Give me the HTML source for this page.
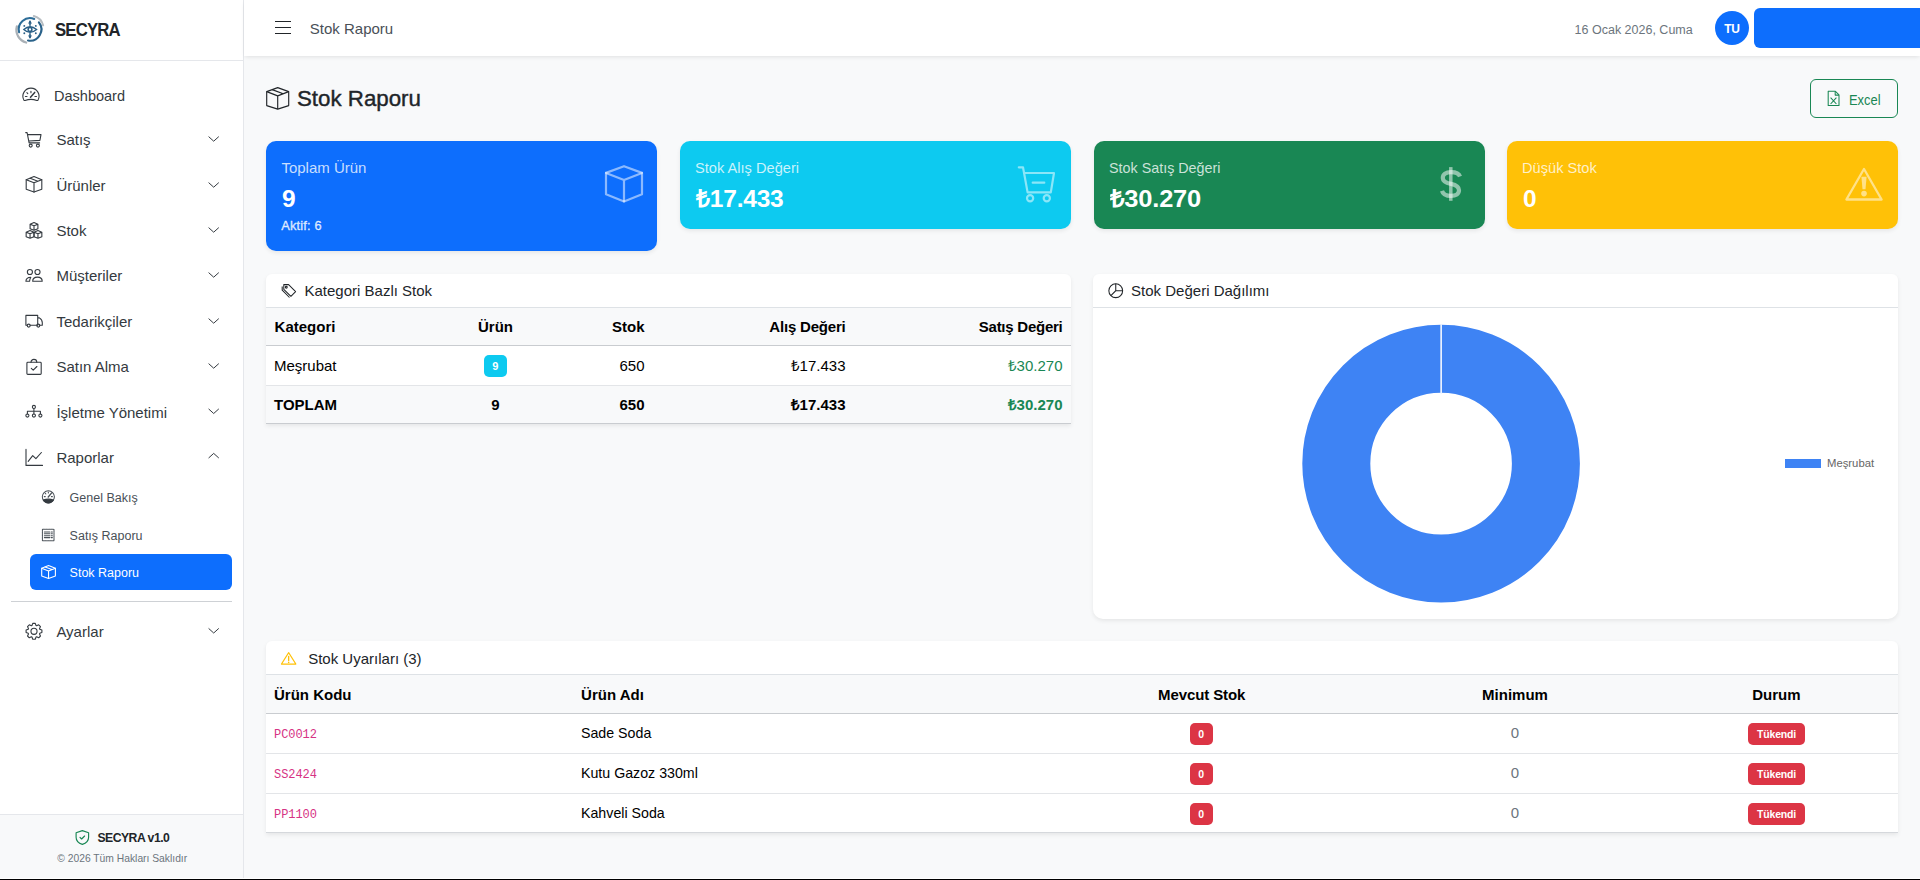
<!DOCTYPE html>
<html lang="tr">
<head>
<meta charset="utf-8">
<title>Stok Raporu</title>
<style>
*{box-sizing:border-box;margin:0;padding:0}
html,body{width:1920px;height:880px;overflow:hidden}
body{font-family:"Liberation Sans",sans-serif;background:#f8f9fa;color:#212529;position:relative}
.abs{position:absolute}
svg{display:block;overflow:visible}
</style>
</head>
<body>
<div class="abs" style="left:0px;top:878px;width:1920px;height:1px;background:#ffffff;"></div>
<div class="abs" style="left:0px;top:879px;width:1920px;height:1px;background:#000000;"></div>
<div class="abs" style="left:0px;top:0px;width:243px;height:878px;background:#ffffff;"></div>
<div class="abs" style="left:243px;top:0px;width:1px;height:878px;background:#e5e7eb;"></div>
<div class="abs" style="left:0px;top:60px;width:243px;height:1px;background:#e5e7eb;"></div>
<div class="abs" style="left:55px;top:21.34px;font-size:18.5px;line-height:1;color:#212529;white-space:nowrap;font-weight:700;letter-spacing:-0.9px;transform:scaleX(0.905);transform-origin:left center;">SECYRA</div>
<div class="abs" style="left:54.4px;top:88.30px;font-size:15px;line-height:1;color:#343a40;white-space:nowrap;transform:scaleX(0.968);transform-origin:left center;">Dashboard</div>
<div class="abs" style="left:56.4px;top:132.30px;font-size:15px;line-height:1;color:#343a40;white-space:nowrap;">Satış</div>
<div class="abs" style="left:56.4px;top:178.30px;font-size:15px;line-height:1;color:#343a40;white-space:nowrap;">Ürünler</div>
<div class="abs" style="left:56.4px;top:223.30px;font-size:15px;line-height:1;color:#343a40;white-space:nowrap;">Stok</div>
<div class="abs" style="left:56.4px;top:268.30px;font-size:15px;line-height:1;color:#343a40;white-space:nowrap;">Müşteriler</div>
<div class="abs" style="left:56.4px;top:314.30px;font-size:15px;line-height:1;color:#343a40;white-space:nowrap;">Tedarikçiler</div>
<div class="abs" style="left:56.4px;top:359.30px;font-size:15px;line-height:1;color:#343a40;white-space:nowrap;">Satın Alma</div>
<div class="abs" style="left:56.4px;top:404.60px;font-size:15px;line-height:1;color:#343a40;white-space:nowrap;">İşletme Yönetimi</div>
<div class="abs" style="left:56.4px;top:450.30px;font-size:15px;line-height:1;color:#343a40;white-space:nowrap;">Raporlar</div>
<div class="abs" style="left:56.4px;top:624.10px;font-size:15px;line-height:1;color:#343a40;white-space:nowrap;">Ayarlar</div>
<div class="abs" style="left:30px;top:554px;width:202px;height:36px;background:#0d6efd;border-radius:6px;"></div>
<div class="abs" style="left:69.6px;top:491.82px;font-size:12.5px;line-height:1;color:#495057;white-space:nowrap;">Genel Bakış</div>
<div class="abs" style="left:69.6px;top:529.62px;font-size:12.5px;line-height:1;color:#495057;white-space:nowrap;">Satış Raporu</div>
<div class="abs" style="left:69.6px;top:566.62px;font-size:12.5px;line-height:1;color:#ffffff;white-space:nowrap;">Stok Raporu</div>
<div class="abs" style="left:11px;top:601px;width:221px;height:1px;background:#ced1d5;"></div>
<div class="abs" style="left:0px;top:814px;width:243px;height:64px;background:#f8f9fa;"></div>
<div class="abs" style="left:0px;top:814px;width:243px;height:1px;background:#e5e7eb;"></div>
<div class="abs" style="left:97.4px;top:831.67px;font-size:12.2px;line-height:1;color:#212529;white-space:nowrap;font-weight:700;letter-spacing:-0.5px;">SECYRA v1.0</div>
<div class="abs" style="left:57.3px;top:854.28px;font-size:10.3px;line-height:1;color:#6c757d;white-space:nowrap;">© 2026 Tüm Hakları Saklıdır</div>
<div class="abs" style="left:244px;top:0;width:1676px;height:56px;background:#fff;box-shadow:0 2px 4px -1px rgba(0,0,0,.1)"></div>
<div class="abs" style="left:274.6px;top:21.2px;width:16px;height:1.3px;background:#212529;"></div>
<div class="abs" style="left:274.6px;top:27.0px;width:16px;height:1.3px;background:#212529;"></div>
<div class="abs" style="left:274.6px;top:32.8px;width:16px;height:1.3px;background:#212529;"></div>
<div class="abs" style="left:309.8px;top:21.30px;font-size:15px;line-height:1;color:#495057;white-space:nowrap;">Stok Raporu</div>
<div class="abs" style="left:1574.6px;top:23.72px;font-size:12.5px;line-height:1;color:#6c757d;white-space:nowrap;">16 Ocak 2026, Cuma</div>
<div class="abs" style="left:1715px;top:11px;width:34px;height:34px;border-radius:50%;background:#0d6efd"></div>
<div class="abs" style="left:1715px;top:23.04px;font-size:12px;line-height:1;color:#fff;white-space:nowrap;font-weight:700;letter-spacing:-0.3px;width:34px;text-align:center;">TU</div>
<div class="abs" style="left:1754px;top:8px;width:180px;height:39.5px;background:#0d6efd;border-radius:6px;"></div>
<div class="abs" style="left:297px;top:87.72px;font-size:22.3px;line-height:1;color:#212529;white-space:nowrap;-webkit-text-stroke:0.4px #212529;">Stok Raporu</div>
<div class="abs" style="left:1810px;top:79px;width:88px;height:38.5px;border:1px solid #198754;border-radius:6px"></div>
<div class="abs" style="left:1849.4px;top:91.70px;font-size:15px;line-height:1;color:#198754;white-space:nowrap;transform:scaleX(0.86);transform-origin:left center;">Excel</div>
<div class="abs" style="left:266px;top:141px;width:391px;height:110px;background:#0d6efd;border-radius:10px;box-shadow:0 2px 4px rgba(0,0,0,.075)"></div>
<div class="abs" style="left:281.4px;top:160.00px;font-size:15px;line-height:1;color:rgba(255,255,255,.78);white-space:nowrap;">Toplam Ürün</div>
<div class="abs" style="left:282px;top:187.26px;font-size:24.5px;line-height:1;color:#fff;white-space:nowrap;font-weight:700;letter-spacing:-0.2px;">9</div>
<div class="abs" style="left:680px;top:141px;width:391px;height:88px;background:#0dcaf0;border-radius:10px;box-shadow:0 2px 4px rgba(0,0,0,.075)"></div>
<div class="abs" style="left:695.4px;top:160.00px;font-size:15px;line-height:1;color:rgba(255,255,255,.78);white-space:nowrap;transform:scaleX(0.975);transform-origin:left center;">Stok Alış Değeri</div>
<div class="abs" style="left:696px;top:187.26px;font-size:24.5px;line-height:1;color:#fff;white-space:nowrap;font-weight:700;letter-spacing:-0.2px;">₺17.433</div>
<div class="abs" style="left:1093.5px;top:141px;width:391px;height:88px;background:#198754;border-radius:10px;box-shadow:0 2px 4px rgba(0,0,0,.075)"></div>
<div class="abs" style="left:1108.9px;top:160.00px;font-size:15px;line-height:1;color:rgba(255,255,255,.78);white-space:nowrap;transform:scaleX(0.955);transform-origin:left center;">Stok Satış Değeri</div>
<div class="abs" style="left:1109.5px;top:187.26px;font-size:24.5px;line-height:1;color:#fff;white-space:nowrap;font-weight:700;letter-spacing:-0.2px;transform:scaleX(1.04);transform-origin:left center;">₺30.270</div>
<div class="abs" style="left:1507px;top:141px;width:391px;height:88px;background:#ffc107;border-radius:10px;box-shadow:0 2px 4px rgba(0,0,0,.075)"></div>
<div class="abs" style="left:1522.4px;top:160.00px;font-size:15px;line-height:1;color:rgba(255,255,255,.78);white-space:nowrap;transform:scaleX(0.975);transform-origin:left center;">Düşük Stok</div>
<div class="abs" style="left:1523px;top:187.26px;font-size:24.5px;line-height:1;color:#fff;white-space:nowrap;font-weight:700;letter-spacing:-0.2px;">0</div>
<div class="abs" style="left:281.2px;top:220.16px;font-size:12.8px;line-height:1;color:rgba(255,255,255,.8);white-space:nowrap;letter-spacing:0.2px;-webkit-text-stroke:0.35px rgba(255,255,255,.8);">Aktif: 6</div>
<div class="abs" style="left:266px;top:274px;width:805px;height:150px;background:#fff;border-radius:6px 6px 0 0;box-shadow:0 2px 4px rgba(0,0,0,.075)"></div>
<div class="abs" style="left:304.5px;top:283.10px;font-size:15px;line-height:1;color:#212529;white-space:nowrap;">Kategori Bazlı Stok</div>
<div class="abs" style="left:266px;top:307px;width:805px;height:1px;background:#dee2e6;"></div>
<div class="abs" style="left:266px;top:308px;width:805px;height:37px;background:#f8f9fa;"></div>
<div class="abs" style="left:266px;top:345px;width:805px;height:1.3px;background:#c9ccd0;"></div>
<div class="abs" style="left:266px;top:385px;width:805px;height:1px;background:#e3e5e8;"></div>
<div class="abs" style="left:266px;top:386px;width:805px;height:37px;background:#f8f9fa;"></div>
<div class="abs" style="left:266px;top:423px;width:805px;height:1.3px;background:#c9ccd0;"></div>
<div class="abs" style="left:274.6px;top:318.90px;font-size:15px;line-height:1;color:#000;white-space:nowrap;font-weight:700;">Kategori</div>
<div class="abs" style="left:425px;top:318.90px;font-size:15px;line-height:1;color:#000;white-space:nowrap;font-weight:700;width:141px;text-align:center;">Ürün</div>
<div class="abs" style="left:500px;top:318.90px;font-size:15px;line-height:1;color:#000;white-space:nowrap;font-weight:700;width:144.5px;text-align:right;">Stok</div>
<div class="abs" style="left:700px;top:318.90px;font-size:15px;line-height:1;color:#000;white-space:nowrap;font-weight:700;letter-spacing:-0.2px;width:145.5px;text-align:right;">Alış Değeri</div>
<div class="abs" style="left:900px;top:318.90px;font-size:15px;line-height:1;color:#000;white-space:nowrap;font-weight:700;letter-spacing:-0.25px;width:162.5px;text-align:right;">Satış Değeri</div>
<div class="abs" style="left:274px;top:358.30px;font-size:15px;line-height:1;color:#000;white-space:nowrap;">Meşrubat</div>
<div class="abs" style="left:484px;top:355.3px;width:22.6px;height:21.5px;background:#0dcaf0;border-radius:5px"></div>
<div class="abs" style="left:484px;top:361.19px;font-size:11px;line-height:1;color:#fff;white-space:nowrap;font-weight:700;width:22.6px;text-align:center;">9</div>
<div class="abs" style="left:500px;top:358.30px;font-size:15px;line-height:1;color:#000;white-space:nowrap;width:144.5px;text-align:right;">650</div>
<div class="abs" style="left:700px;top:358.30px;font-size:15px;line-height:1;color:#000;white-space:nowrap;width:145.5px;text-align:right;">₺17.433</div>
<div class="abs" style="left:900px;top:358.30px;font-size:15px;line-height:1;color:#198754;white-space:nowrap;width:162.5px;text-align:right;">₺30.270</div>
<div class="abs" style="left:274px;top:397.30px;font-size:15px;line-height:1;color:#000;white-space:nowrap;font-weight:700;">TOPLAM</div>
<div class="abs" style="left:425px;top:397.30px;font-size:15px;line-height:1;color:#000;white-space:nowrap;font-weight:700;width:141px;text-align:center;">9</div>
<div class="abs" style="left:500px;top:397.30px;font-size:15px;line-height:1;color:#000;white-space:nowrap;font-weight:700;width:144.5px;text-align:right;">650</div>
<div class="abs" style="left:700px;top:397.30px;font-size:15px;line-height:1;color:#000;white-space:nowrap;font-weight:700;width:145.5px;text-align:right;">₺17.433</div>
<div class="abs" style="left:900px;top:397.30px;font-size:15px;line-height:1;color:#198754;white-space:nowrap;font-weight:700;width:162.5px;text-align:right;">₺30.270</div>
<div class="abs" style="left:1093px;top:274px;width:805px;height:345px;background:#fff;border-radius:6px 6px 10px 10px;box-shadow:0 2px 4px rgba(0,0,0,.075)"></div>
<div class="abs" style="left:1131.1px;top:283.30px;font-size:15px;line-height:1;color:#212529;white-space:nowrap;">Stok Değeri Dağılımı</div>
<div class="abs" style="left:1093px;top:307px;width:805px;height:1px;background:#dee2e6;"></div>
<div class="abs" style="left:1785px;top:458.8px;width:35.8px;height:9.4px;background:#3e83f4;"></div>
<div class="abs" style="left:1827px;top:457.93px;font-size:11.3px;line-height:1;color:#666666;white-space:nowrap;">Meşrubat</div>
<div class="abs" style="left:266px;top:641px;width:1632px;height:191.5px;background:#fff;border-radius:6px 6px 0 0;box-shadow:0 2px 4px rgba(0,0,0,.075)"></div>
<div class="abs" style="left:308.2px;top:651.20px;font-size:15px;line-height:1;color:#212529;white-space:nowrap;">Stok Uyarıları (3)</div>
<div class="abs" style="left:266px;top:674px;width:1632px;height:1px;background:#dee2e6;"></div>
<div class="abs" style="left:266px;top:675px;width:1632px;height:38px;background:#f8f9fa;"></div>
<div class="abs" style="left:266px;top:713px;width:1632px;height:1.3px;background:#c9ccd0;"></div>
<div class="abs" style="left:266px;top:753px;width:1632px;height:1px;background:#e3e5e8;"></div>
<div class="abs" style="left:266px;top:793px;width:1632px;height:1px;background:#e3e5e8;"></div>
<div class="abs" style="left:266px;top:831.5px;width:1632px;height:1px;background:#d5d8dc;"></div>
<div class="abs" style="left:274px;top:687.10px;font-size:15px;line-height:1;color:#000;white-space:nowrap;font-weight:700;">Ürün Kodu</div>
<div class="abs" style="left:581.1px;top:687.10px;font-size:15px;line-height:1;color:#000;white-space:nowrap;font-weight:700;">Ürün Adı</div>
<div class="abs" style="left:1101.7px;top:687.10px;font-size:15px;line-height:1;color:#000;white-space:nowrap;font-weight:700;letter-spacing:-0.1px;width:200px;text-align:center;">Mevcut Stok</div>
<div class="abs" style="left:1415px;top:687.10px;font-size:15px;line-height:1;color:#000;white-space:nowrap;font-weight:700;width:200px;text-align:center;">Minimum</div>
<div class="abs" style="left:1676.4px;top:687.10px;font-size:15px;line-height:1;color:#000;white-space:nowrap;font-weight:700;width:200px;text-align:center;">Durum</div>
<div class="abs" style="left:274px;top:728.84px;font-size:12px;line-height:1;color:#d63384;white-space:nowrap;letter-spacing:-0.07px;font-family:'Liberation Mono',monospace;">PC0012</div>
<div class="abs" style="left:581.1px;top:725.30px;font-size:15px;line-height:1;color:#000;white-space:nowrap;transform:scaleX(0.947);transform-origin:left center;">Sade Soda</div>
<div class="abs" style="left:1189.6px;top:723.3px;width:23.3px;height:21.3px;background:#dc3545;border-radius:5px"></div>
<div class="abs" style="left:1189.6px;top:729.41px;font-size:10.5px;line-height:1;color:#fff;white-space:nowrap;font-weight:700;width:23.3px;text-align:center;">0</div>
<div class="abs" style="left:1415px;top:725.30px;font-size:15px;line-height:1;color:#6c757d;white-space:nowrap;width:200px;text-align:center;">0</div>
<div class="abs" style="left:1748px;top:723.3px;width:57px;height:21.3px;background:#dc3545;border-radius:5px"></div>
<div class="abs" style="left:1748px;top:729.41px;font-size:10.5px;line-height:1;color:#fff;white-space:nowrap;font-weight:700;letter-spacing:-0.2px;width:57px;text-align:center;">Tükendi</div>
<div class="abs" style="left:274px;top:768.84px;font-size:12px;line-height:1;color:#d63384;white-space:nowrap;letter-spacing:-0.07px;font-family:'Liberation Mono',monospace;">SS2424</div>
<div class="abs" style="left:581.1px;top:765.30px;font-size:15px;line-height:1;color:#000;white-space:nowrap;transform:scaleX(0.947);transform-origin:left center;">Kutu Gazoz 330ml</div>
<div class="abs" style="left:1189.6px;top:763.3px;width:23.3px;height:21.3px;background:#dc3545;border-radius:5px"></div>
<div class="abs" style="left:1189.6px;top:769.41px;font-size:10.5px;line-height:1;color:#fff;white-space:nowrap;font-weight:700;width:23.3px;text-align:center;">0</div>
<div class="abs" style="left:1415px;top:765.30px;font-size:15px;line-height:1;color:#6c757d;white-space:nowrap;width:200px;text-align:center;">0</div>
<div class="abs" style="left:1748px;top:763.3px;width:57px;height:21.3px;background:#dc3545;border-radius:5px"></div>
<div class="abs" style="left:1748px;top:769.41px;font-size:10.5px;line-height:1;color:#fff;white-space:nowrap;font-weight:700;letter-spacing:-0.2px;width:57px;text-align:center;">Tükendi</div>
<div class="abs" style="left:274px;top:808.84px;font-size:12px;line-height:1;color:#d63384;white-space:nowrap;letter-spacing:-0.07px;font-family:'Liberation Mono',monospace;">PP1100</div>
<div class="abs" style="left:581.1px;top:805.30px;font-size:15px;line-height:1;color:#000;white-space:nowrap;transform:scaleX(0.947);transform-origin:left center;">Kahveli Soda</div>
<div class="abs" style="left:1189.6px;top:803.3px;width:23.3px;height:21.3px;background:#dc3545;border-radius:5px"></div>
<div class="abs" style="left:1189.6px;top:809.41px;font-size:10.5px;line-height:1;color:#fff;white-space:nowrap;font-weight:700;width:23.3px;text-align:center;">0</div>
<div class="abs" style="left:1415px;top:805.30px;font-size:15px;line-height:1;color:#6c757d;white-space:nowrap;width:200px;text-align:center;">0</div>
<div class="abs" style="left:1748px;top:803.3px;width:57px;height:21.3px;background:#dc3545;border-radius:5px"></div>
<div class="abs" style="left:1748px;top:809.41px;font-size:10.5px;line-height:1;color:#fff;white-space:nowrap;font-weight:700;letter-spacing:-0.2px;width:57px;text-align:center;">Tükendi</div>
<svg class="abs" style="left:0;top:0" width="1920" height="880" viewBox="0 0 1920 880"><path d="M208.6 136.6 L213.7 141.2 L218.8 136.6" stroke="#343a40" stroke-width="1" fill="none"/><path d="M208.6 182.6 L213.7 187.2 L218.8 182.6" stroke="#343a40" stroke-width="1" fill="none"/><path d="M208.6 227.6 L213.7 232.2 L218.8 227.6" stroke="#343a40" stroke-width="1" fill="none"/><path d="M208.6 272.6 L213.7 277.2 L218.8 272.6" stroke="#343a40" stroke-width="1" fill="none"/><path d="M208.6 318.6 L213.7 323.2 L218.8 318.6" stroke="#343a40" stroke-width="1" fill="none"/><path d="M208.6 363.6 L213.7 368.2 L218.8 363.6" stroke="#343a40" stroke-width="1" fill="none"/><path d="M208.6 408.9 L213.7 413.5 L218.8 408.9" stroke="#343a40" stroke-width="1" fill="none"/><path d="M208.6 458.0 L213.7 453.4 L218.8 458.0" stroke="#343a40" stroke-width="1" fill="none"/><path d="M208.6 628.4 L213.7 633.0 L218.8 628.4" stroke="#343a40" stroke-width="1" fill="none"/><g fill="none" stroke="#343a40" stroke-width="1.1" stroke-linecap="round" stroke-linejoin="round"><path d="M23.9 100.1 A8.05 8.05 0 1 1 38.0 100.1 Q37.6 100.7 36.8 100.4 Q31 98.4 25.1 100.4 Q24.3 100.7 23.9 100.1Z"/><path d="M30.95 91.3V92.7M25.4 96.5H27M34.9 96.5H36.5M26.9 92.7L27.8 93.6"/><path d="M30.5 97.2L34.7 92.4" stroke-width="1.5"/><path d="M25.7 132.6H27.1L29.1 142.9H39.6M27.6 134.6H41L39.9 140.4L28.8 141"/><circle cx="30.7" cy="145.6" r="1.5"/><circle cx="37.9" cy="145.6" r="1.5"/><path d="M34 176.6 41.8 179.7V189.2L34 192.1 26.2 189.2V179.7Z"/><path d="M26.2 179.7 34 182.8 41.8 179.7M34 182.8V192.1M30.1 178.2 37.9 181.2"/><path d="M34 222.6 L37.9 224.2 V228.7 L34 230.29999999999998 L30.1 228.7 V224.2Z M30.1 224.2 L34 225.79999999999998 L37.9 224.2 M34 225.79999999999998 V230.29999999999998"/><path d="M30.05 230.6 L33.95 232.2 V236.7 L30.05 238.29999999999998 L26.150000000000002 236.7 V232.2Z M26.150000000000002 232.2 L30.05 233.79999999999998 L33.95 232.2 M30.05 233.79999999999998 V238.29999999999998"/><path d="M37.95 230.6 L41.85 232.2 V236.7 L37.95 238.29999999999998 L34.050000000000004 236.7 V232.2Z M34.050000000000004 232.2 L37.95 233.79999999999998 L41.85 232.2 M37.95 233.79999999999998 V238.29999999999998"/><circle cx="29.9" cy="272" r="2.55"/><circle cx="37.5" cy="272" r="2.55"/><path d="M32.7 281.2C32.7 278.7 34.7 277.1 37.45 277.1S42.2 278.7 42.2 281.2Z"/><path d="M25.9 281.2Q26.1 277.4 30.8 277.3Q29.7 279 29.6 281.2Z"/><path d="M27.2 325.2H25.9V315.4H37.7V325.2H36.9M30.2 325.2H36.8M37.7 317.9H39.4Q42.3 319.6 42.3 322.8V325.2H39.8"/><circle cx="28.7" cy="325.6" r="1.5"/><circle cx="38.3" cy="325.6" r="1.5"/><rect x="26.9" y="362.3" width="14.3" height="12.1" rx="0.9"/><path d="M31 362.3A2.9 2.9 0 0 1 36.8 362.3M31.3 368.4L33.2 370.2L36.9 366.5"/><circle cx="33.9" cy="406.9" r="1.55"/><path d="M33.9 408.5V411.3M27.4 414V411.3H40.4V414M33.9 411.3V414"/><circle cx="27.4" cy="415.6" r="1.55"/><circle cx="33.9" cy="415.6" r="1.55"/><circle cx="40.4" cy="415.6" r="1.55"/><path d="M26 449.4V465.4H42.5M28.2 461.3L32.7 455.6L35.9 458.7L41.4 452.5"/><path d="M31.96 625.55 L32.75 623.40 L35.25 623.40 L36.04 625.55 L36.63 625.79 L38.70 624.83 L40.47 626.60 L39.51 628.67 L39.75 629.26 L41.90 630.05 L41.90 632.55 L39.75 633.34 L39.51 633.93 L40.47 636.00 L38.70 637.77 L36.63 636.81 L36.04 637.05 L35.25 639.20 L32.75 639.20 L31.96 637.05 L31.37 636.81 L29.30 637.77 L27.53 636.00 L28.49 633.93 L28.25 633.34 L26.10 632.55 L26.10 630.05 L28.25 629.26 L28.49 628.67 L27.53 626.60 L29.30 624.83 L31.37 625.79Z"/><circle cx="34" cy="631.3" r="3.05"/></g><g fill="none" stroke="#495057" stroke-width="1.05" stroke-linecap="round" stroke-linejoin="round"><circle cx="48.35" cy="496.85" r="6.05"/><path d="M43.2 500Q48.35 498.3 53.5 500A6.05 6.05 0 0 1 43.2 500Z" fill="#343a40" stroke="#343a40"/><path d="M48.35 491.9V492.9M44.3 496.6H45.3M51.4 496.6H52.4M45.3 493.4L45.9 494"/><path d="M48.2 497L51.7 492.9" stroke-width="1.3"/><rect x="42.4" y="529.2" width="11.6" height="11.6" rx="0.4" stroke-dasharray="1 0.6"/><path d="M44.4 531.9H49.8M44.4 533.8H49.8M44.4 535.7H49.8M44.4 537.6H49.8M51.2 531.9H52.4M51.2 533.8H52.4M51.2 535.7H52.4M51.2 537.6H52.4"/></g><g fill="none" stroke="#ffffff" stroke-width="1.1" stroke-linecap="round" stroke-linejoin="round"><path d="M48.55 565.5 55.4 568.2V576.1L48.55 578.5 41.7 576.1V568.2Z"/><path d="M41.7 568.2 48.55 570.9 55.4 568.2M48.55 570.9V578.5M45.1 566.9 52 569.5"/></g><g fill="none" stroke-linecap="round"><path d="M26.18 42.55A13.2 13.2 0 0 1 16.85 26.38" stroke="#a9b0b6" stroke-width="2.2"/><path d="M33.82 16.05A13.2 13.2 0 0 1 43.15 25.38" stroke="#b7bdc2" stroke-width="2"/><path d="M19.09 32.32A11.3 11.3 0 0 1 34.23 18.92" stroke="#2d6d98" stroke-width="2.1"/><path d="M38.90 22.44A11.3 11.3 0 0 1 28.04 40.53" stroke="#2a628a" stroke-width="2.2"/><path d="M23.8 29.5Q30 23.8 36.6 29.5Q30 35.2 23.8 29.5Z" stroke="#2a5f86" stroke-width="1.4"/><circle cx="30" cy="29.5" r="1.9" stroke="#2a5f86" stroke-width="1.5"/><path d="M30 21.2V25.2M30 33.8V37.6" stroke="#2a5f86" stroke-width="1.6"/></g><g fill="#2a5f86"><path d="M28 23.4 30 20.6 32 23.4Z M28 35.6 30 38.4 32 35.6Z"/><circle cx="24.3" cy="25.9" r="0.95"/><circle cx="35.8" cy="25.9" r="0.95"/><circle cx="24.3" cy="33.2" r="0.95"/><circle cx="35.8" cy="33.2" r="0.95"/></g><g fill="none" stroke="#198754" stroke-width="1.15" stroke-linecap="round" stroke-linejoin="round"><path d="M82.35 830.6 88.6 832.7V837.3C88.6 840.9 86 843.3 82.35 844.4 78.7 843.3 76.1 840.9 76.1 837.3V832.7Z"/><path d="M80 837.4l1.6 1.6 3-3"/></g><g fill="none" stroke="#212529" stroke-width="1.15" stroke-linejoin="round"><path d="M277.7 87.6 288.7 91.6V105.6L277.7 109.1 266.7 105.6V91.6Z"/><path d="M266.7 91.6 277.7 95.9 288.7 91.6M277.7 95.9V109.1M272.2 89.6 283.2 93.8"/></g><g fill="none" stroke="#198754" stroke-width="1.05" stroke-linejoin="round"><path d="M1828.2 91.3H1835.4L1839 94.9V105.5H1828.2Z"/><path d="M1835.2 91.3V95.1H1839M1830.6 97.6L1836.4 104M1836.4 97.6L1830.6 104"/></g><g fill="none" stroke="rgba(255,255,255,.52)" stroke-width="2.2" stroke-linejoin="round" stroke-linecap="round"><path d="M624 166.2 642 172.9V194.3L624 201.5 606 194.3V172.9Z"/><path d="M606 172.9 624 180 642 172.9M624 180V201.5"/><path d="M1018.8 167.3H1023L1027.6 192.4H1050.8L1054 173H1024"/><path d="M1032.7 182.7H1044.3"/><circle cx="1030.1" cy="198.2" r="3.1"/><circle cx="1046.8" cy="198.2" r="3.1"/><path d="M1864 169 1881.6 199.5H1846.4Z" stroke-width="2.3"/></g><g fill="rgba(255,255,255,.52)" stroke="none"><path d="M1861.4 176.8h5.2l-1.1 12.4h-3Z"/><circle cx="1864" cy="193.6" r="2.8"/></g><g fill="none" stroke="rgba(255,255,255,.52)"><path stroke-width="4.2" d="M1460 176.5C1459 173.5 1455.8 172.1 1451 172.1 1445.8 172.1 1442.8 174.5 1442.8 177.9 1442.8 181.5 1446 182.8 1451 183.9 1456.5 185.1 1459 186.8 1459 190.3 1459 193.9 1455.8 195.9 1451 195.9 1445.8 195.9 1442.8 193.6 1442 190.8"/><path stroke-width="3.5" d="M1450.8 167.1v33.7"/></g><g fill="none" stroke="#212529" stroke-width="1.05" stroke-linejoin="round"><path d="M283.8 284.6H288.6L295.6 291.6L290.9 296.3L283.8 289.3Z"/><circle cx="286.3" cy="287.2" r="0.9"/><path d="M282.2 286.4V290.2L289.5 297.5"/></g><g fill="none" stroke="#212529" stroke-width="1.05"><circle cx="1115.75" cy="290.7" r="6.9"/><path d="M1115.75 283.8V290.7L1110.9 295.6M1115.75 290.7H1122.65"/></g><circle cx="1441.1" cy="463.6" r="104.8" fill="none" stroke="#3e83f4" stroke-width="68"/><line x1="1441.15" y1="324" x2="1441.15" y2="393.5" stroke="#e8f0fe" stroke-width="1.7"/><g fill="none" stroke="#ffc107" stroke-width="1.05" stroke-linejoin="round"><path d="M288.65 652.6 295.9 664.1H281.4Z"/><path d="M288.65 656.4V660.4" stroke-linecap="round" stroke-width="1.35"/></g><circle cx="288.65" cy="662.4" r="0.8" fill="#ffc107"/></svg>
</body>
</html>
